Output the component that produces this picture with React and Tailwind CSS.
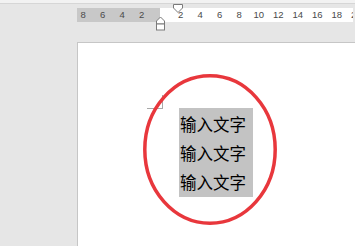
const marks = ["8", "6", "4", "2", "", "2", "4", "6", "8", "10", "12", "14", "16", "18", "20"];

function Ruler() {
  return (
    <div className="relative ml-[77px] mt-[4px] flex h-[14px] w-[276px]">
      <div className="w-[83px] bg-[#c8c8c8]" />
      <div className="flex-1 bg-white" />
      {/* number scale */}
      <div className="absolute inset-y-0 left-[-3.5px] flex items-center overflow-hidden w-[279px]">
        {marks.map((m, i) => (
          <span
            key={i}
            className="w-[19.5px] shrink-0 text-center text-[9.5px] leading-none text-[#4a4a4a]"
            style={{ fontFamily: '"Liberation Sans", Arial, sans-serif' }}
          >
            {m}
          </span>
        ))}
      </div>
    </div>
  );
}

function IndentMarkers() {
  return (
    <>
      <svg className="absolute left-[172px] top-[4px]" width="12" height="9" viewBox="0 0 12 9">
        <path d="M1.5 0.5 H10.5 V4 L6 8.5 L1.5 4 Z" fill="#fff" stroke="#7a7a7a" strokeWidth="1" />
      </svg>
      <svg className="absolute left-[155px] top-[16px]" width="11" height="15" viewBox="0 0 11 15">
        <path d="M1.5 8 V5 L5.5 1 L9.5 5 V8 Z" fill="#fff" stroke="#7a7a7a" strokeWidth="1" />
        <rect x="1.5" y="8" width="8" height="6" fill="#fff" stroke="#7a7a7a" strokeWidth="1" />
      </svg>
    </>
  );
}

export default function App() {
  return (
    <div className="relative h-[246px] w-[355px] overflow-hidden bg-[#e6e6e6] flex flex-col">
      <div className="h-[4px] shrink-0 bg-[#f2f2f2] border-b border-[#d6d6d6]" />
      <Ruler />
      <IndentMarkers />

      <div className="ml-[77px] mt-[20px] flex-1 border-l border-t border-[#c6c6c6] bg-white">
        <div
          className="ml-[101px] mt-[65px] h-[89px] w-[74px] bg-[#c3c3c3] pl-[1px] pt-[2px] text-[16.5px] leading-[29px] text-black"
          style={{ fontFamily: '"Noto Sans CJK SC", "Noto Sans", sans-serif' }}
        >
          <p>输入文字</p>
          <p>输入文字</p>
          <p>输入文字</p>
        </div>
      </div>

      {/* margin crop mark */}
      <div className="absolute left-[147px] top-[95px] h-[14px] w-[16px] border-b border-r border-[#a8a8a8]" />

      {/* red ellipse annotation */}
      <svg className="absolute left-[143px] top-[74px]" width="134" height="151" viewBox="0 0 134 151">
        <ellipse cx="67" cy="75.5" rx="65.2" ry="73.7" fill="none" stroke="#e8373c" strokeWidth="3.5" />
      </svg>
    </div>
  );
}
